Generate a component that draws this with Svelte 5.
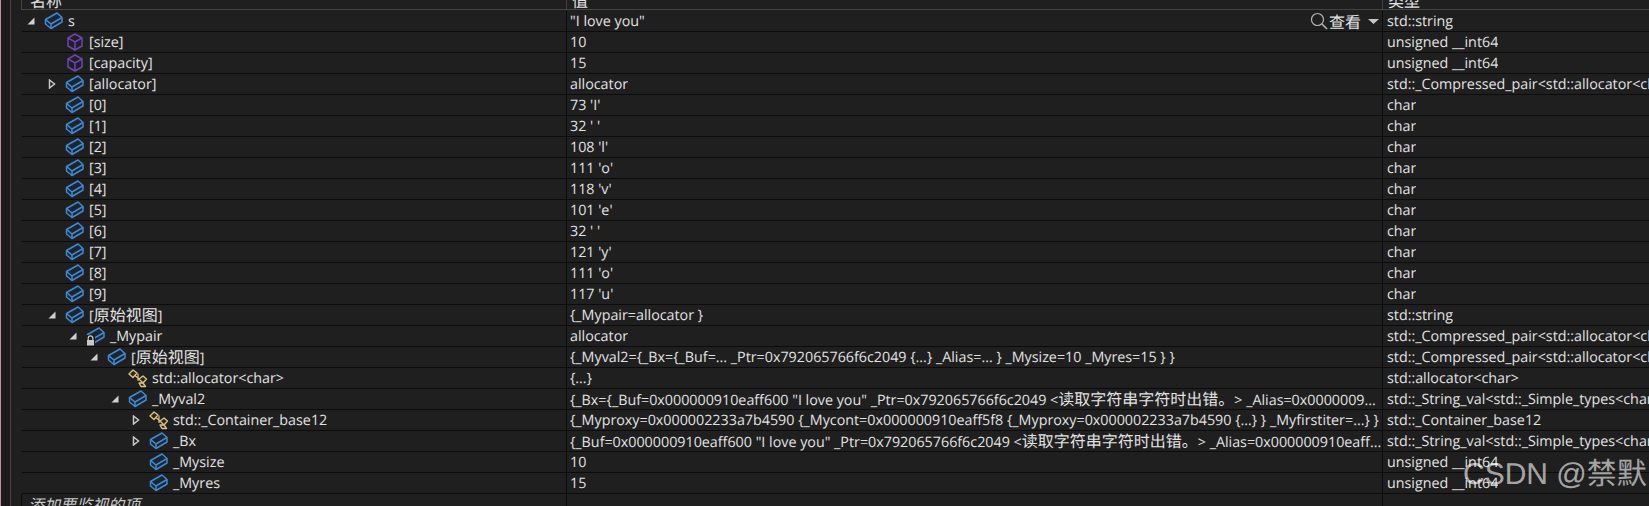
<script lang="ts">
  const str = 'std::_String_val<std::_Simple_types<char> >';
  const pair = 'std::_Compressed_pair<std::allocator<char>,std::_String_val>';
  const rows = [
    { lv: 0, arrow: 'open', icon: 'box', name: 's', value: '"I love you"', type: 'std::string', view: true },
    { lv: 1, icon: 'cube', name: '[size]', value: '10', type: 'unsigned __int64' },
    { lv: 1, icon: 'cube', name: '[capacity]', value: '15', type: 'unsigned __int64' },
    { lv: 1, arrow: 'closed', icon: 'box', name: '[allocator]', value: 'allocator', type: pair },
    { lv: 1, icon: 'box', name: '[0]', value: "73 'I'", type: 'char' },
    { lv: 1, icon: 'box', name: '[1]', value: "32 ' '", type: 'char' },
    { lv: 1, icon: 'box', name: '[2]', value: "108 'l'", type: 'char' },
    { lv: 1, icon: 'box', name: '[3]', value: "111 'o'", type: 'char' },
    { lv: 1, icon: 'box', name: '[4]', value: "118 'v'", type: 'char' },
    { lv: 1, icon: 'box', name: '[5]', value: "101 'e'", type: 'char' },
    { lv: 1, icon: 'box', name: '[6]', value: "32 ' '", type: 'char' },
    { lv: 1, icon: 'box', name: '[7]', value: "121 'y'", type: 'char' },
    { lv: 1, icon: 'box', name: '[8]', value: "111 'o'", type: 'char' },
    { lv: 1, icon: 'box', name: '[9]', value: "117 'u'", type: 'char' },
    { lv: 1, arrow: 'open', icon: 'box', name: '[原始视图]', value: '{_Mypair=allocator }', type: 'std::string' },
    { lv: 2, arrow: 'open', icon: 'private', name: '_Mypair', value: 'allocator', type: pair },
    { lv: 3, arrow: 'open', icon: 'box', name: '[原始视图]', value: '{_Myval2={_Bx={_Buf=... _Ptr=0x792065766f6c2049 {...} _Alias=... } _Mysize=10 _Myres=15 } }', type: pair },
    { lv: 4, icon: 'base', name: 'std::allocator<char>', value: '{...}', type: 'std::allocator<char>' },
    { lv: 4, arrow: 'open', icon: 'box', name: '_Myval2', value: '{_Bx={_Buf=0x000000910eaff600 "I love you" _Ptr=0x792065766f6c2049 <读取字符串字符时出错。> _Alias=0x0000009...', type: str },
    { lv: 5, arrow: 'closed', icon: 'base', name: 'std::_Container_base12', value: '{_Myproxy=0x000002233a7b4590 {_Mycont=0x000000910eaff5f8 {_Myproxy=0x000002233a7b4590 {...} } _Myfirstiter=...} }', type: 'std::_Container_base12' },
    { lv: 5, arrow: 'closed', icon: 'box', name: '_Bx', value: '{_Buf=0x000000910eaff600 "I love you" _Ptr=0x792065766f6c2049 <读取字符串字符时出错。> _Alias=0x000000910eaff...', type: str },
    { lv: 5, icon: 'box', name: '_Mysize', value: '10', type: 'unsigned __int64' },
    { lv: 5, icon: 'box', name: '_Myres', value: '15', type: 'unsigned __int64' }
  ];

  // chinese runs are set a bit larger than the latin text
  function parts(s: string) {
    return s.split(/([\u4e00-\u9fff。]+)/);
  }
</script>

{#snippet mixed(s)}
  {#each parts(s) as p, i}{#if i % 2}<span class="cjk">{p}</span>{:else}{p}{/if}{/each}
{/snippet}

{#snippet boxIcon()}
  <path d="M1.5 8.5 L13 2 L18 6.5 L18 11 L7 17.5 L1.5 13 Z" fill="#1b2530" stroke="#4289d2" stroke-width="1.5" stroke-linejoin="round" />
  <path d="M1.5 8.5 L7 13 L18 6.5 M7 13 L7 17.5" fill="none" stroke="#4289d2" stroke-width="1.5" />
{/snippet}

<div class="page">
  <div class="gutter"></div>
  <div class="panel">
    <div class="head">
      <div class="hcell name-col"><span>名称</span></div>
      <div class="hcell value-col"><span>值</span></div>
      <div class="hcell type-col"><span>类型</span></div>
    </div>

    {#each rows as r}
      <div class="row">
        <div class="cell name-col" style="padding-left: {r.lv * 21}px">
          <span class="arrow">
            {#if r.arrow === 'open'}
              <svg width="8" height="8" viewBox="0 0 8 8"><path d="M7.5 0.5 V7.5 H0.5 Z" fill="#cfcfcf" /></svg>
            {:else if r.arrow === 'closed'}
              <svg width="8" height="10" viewBox="0 0 8 10"><path d="M1.5 1 L6.5 5 L1.5 9 Z" fill="none" stroke="#c8c8c8" stroke-width="1.5" /></svg>
            {/if}
          </span>
          <svg class="icon" width="20" height="20" viewBox="0 0 20 20">
            {#if r.icon === 'box'}
              {@render boxIcon()}
            {:else if r.icon === 'cube'}
              <path d="M10 2 L17 6 L17 14 L10 18 L3 14 L3 6 Z" fill="#211b2b" stroke="#6c48a8" stroke-width="1.5" stroke-linejoin="round" />
              <path d="M3 6 L10 10 L17 6 M10 10 L10 18" fill="none" stroke="#6c48a8" stroke-width="1.5" />
            {:else if r.icon === 'private'}
              {@render boxIcon()}
              <rect x="0" y="9" width="9" height="11" fill="#1f1f1f" />
              <path d="M2.2 14 V12.2 a2.3 2.3 0 0 1 4.6 0 V14" fill="none" stroke="#c8c8c8" stroke-width="1.2" />
              <rect x="1" y="14" width="7" height="5.5" fill="#c8c8c8" />
            {:else}
              <path d="M1 6 L5 2 L9 5 L5 9.5 Z M11 11 L15 8 L18.5 11 L15 15 Z M11 15 L15 15 L17.5 18.5 L13 18.5 Z" fill="#2a2618" stroke="#dcc287" stroke-width="1.4" stroke-linejoin="round" />
              <path d="M7 7.5 L11.5 11.5 M10 5.5 L10 13" fill="none" stroke="#dcc287" stroke-width="1.2" />
            {/if}
          </svg>
          <span class="label">{@render mixed(r.name)}</span>
        </div>
        <div class="cell value-col">
          <span class="text">{@render mixed(r.value)}</span>
          {#if r.view}
            <span class="view">
              <svg width="18" height="18" viewBox="0 0 18 18"><circle cx="7.5" cy="7.5" r="6" fill="none" stroke="#b4b4b4" stroke-width="1.2" /><path d="M12 12 L17 17" stroke="#b4b4b4" stroke-width="1.6" /></svg>
              <span class="cjk">查看</span>
              <svg class="caret" width="11" height="5" viewBox="0 0 11 5"><path d="M0 0 H11 L5.5 5 Z" fill="#c8c8c8" /></svg>
            </span>
          {/if}
        </div>
        <div class="cell type-col"><span class="text">{r.type}</span></div>
      </div>
    {/each}

    <div class="row add">
      <div class="cell name-col"><em>添加要监视的项</em></div>
      <div class="cell value-col"></div>
      <div class="cell type-col"></div>
    </div>
  </div>
  <div class="mark">CSDN @禁默</div>
</div>

<style>
  :global(body) {
    margin: 0;
    background: #1f1f1f;
  }

  .page {
    position: relative;
    display: flex;
    width: 1649px;
    height: 506px;
    overflow: hidden;
    background: #1f1f1f;
    color: #e2e2e2;
    font-family: "Open Sans", "Noto Sans CJK SC", sans-serif;
    font-size: 14.3px;
    text-rendering: geometricPrecision;
  }

  .cjk {
    font-size: 16px;
  }

  .gutter {
    box-sizing: border-box;
    width: 11px;
    flex: none;
    background: #1b1b1b;
    border-left: 1px solid #c98a9c;
    border-right: 1px solid #434343;
  }

  .panel {
    flex: 1;
    min-width: 0;
    padding-left: 11px;
  }

  .head {
    display: flex;
    align-items: flex-end;
    height: 9px;
    margin-left: -1px;
    margin-bottom: 1px;
    border-bottom: 1px solid #434343;
    overflow: hidden;
    font-size: 16px;
  }

  .hcell {
    box-sizing: border-box;
    height: 9px;
    border-left: 1px solid #434343;
    padding-left: 8px;
    overflow: hidden;
    display: flex;
    align-items: flex-end;
  }

  .hcell span {
    margin-bottom: -1px;
    line-height: 18px;
    white-space: nowrap;
  }

  .hcell.name-col {
    width: 545px;
  }

  .row {
    display: flex;
    height: 21px;
    box-sizing: border-box;
    border-bottom: 1px solid #0c0c0c;
  }

  .cell {
    display: flex;
    align-items: center;
    height: 20px;
    box-sizing: border-box;
    overflow: hidden;
    white-space: nowrap;
  }

  .name-col {
    width: 544px;
    flex: none;
  }

  .value-col {
    width: 816px;
    flex: none;
    padding-left: 3px;
    border-left: 1px solid #0c0c0c;
  }

  .type-col {
    flex: 1;
    min-width: 0;
    padding-left: 4px;
    border-left: 1px solid #0c0c0c;
  }

  .head .value-col,
  .head .type-col {
    padding-left: 5px;
    border-left-color: #434343;
  }

  .arrow {
    display: flex;
    justify-content: flex-end;
    width: 13px;
    flex: none;
    margin-right: 9px;
  }

  .icon {
    flex: none;
    margin-right: 4px;
  }

  .label,
  .text {
    line-height: 18px;
    padding-top: 2px;
  }

  .text {
    overflow: hidden;
  }

  .view {
    display: flex;
    align-items: center;
    gap: 1px;
    margin-left: auto;
    padding-right: 3px;
  }

  .caret {
    margin-left: 6px;
  }

  .add {
    height: 20px;
    border-bottom: 0;
    font-size: 16px;
  }

  .add .name-col {
    border-left: 1px solid #0c0c0c;
    padding-left: 6px;
    margin-left: -1px;
    width: 545px;
  }

  .add em {
    color: #c8c8c8;
  }

  .mark {
    position: absolute;
    left: 1463px;
    top: 455px;
    font-size: 30px;
    line-height: 40px;
    white-space: nowrap;
    color: rgba(255, 255, 255, 0.62);
    font-family: "Liberation Sans", "Noto Sans CJK SC", sans-serif;
  }
</style>
